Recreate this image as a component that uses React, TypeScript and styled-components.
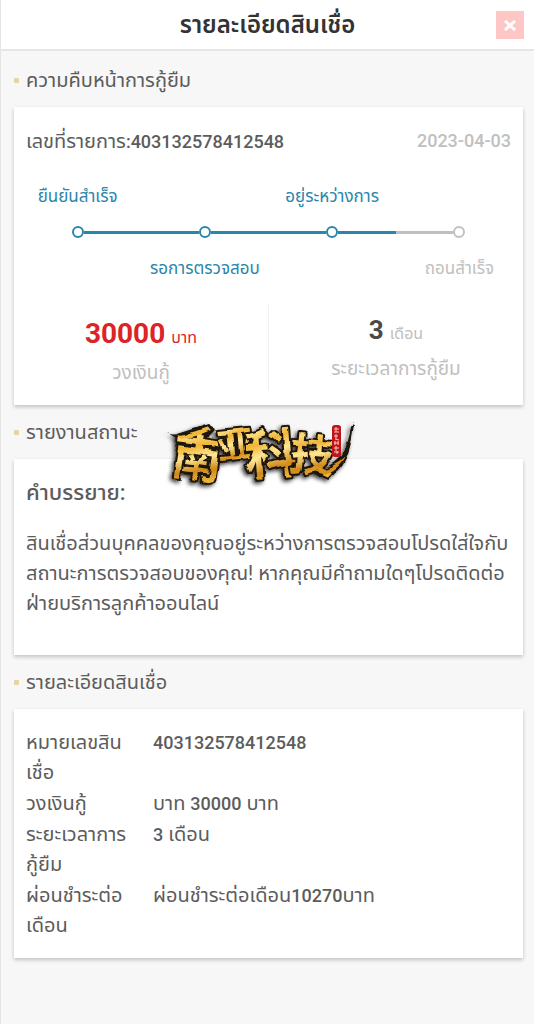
import React from "react";
import styled, { createGlobalStyle, css } from "styled-components";

const GlobalStyle = createGlobalStyle`
  * { box-sizing: border-box; }
  body {
    margin: 0;
    background: #f7f7f7;
    color: #5c5c5c;
    font-family: Roboto, "Noto Sans Thai", "Noto Sans", "Noto Sans CJK SC", sans-serif;
    font-size: 20px;
    line-height: 30px;
  }
  h1, h2, h3, p { margin: 0; }
`;

const blue = "#2b86ab";
const grey = "#c0c0c0";

const Page = styled.div`
  min-height: 100vh;
  border-left: 1px solid #e4e4e4;
  padding-bottom: 64px;
`;

const Header = styled.header`
  display: grid;
  grid-template-columns: 48px 1fr 48px;
  align-items: center;
  height: 51px;
  background: #fff;
  border-bottom: 2px solid #e6e6e6;
`;

const Title = styled.h1`
  grid-column: 2;
  text-align: center;
  font-size: 24px;
  font-weight: 600;
  color: #333;
`;

const CloseButton = styled.button`
  display: flex;
  align-items: center;
  justify-content: center;
  justify-self: center;
  width: 28px;
  height: 28px;
  padding: 0;
  border: 0;
  background: #ffc6c6;
`;

const Main = styled.main`
  padding: 2px 11px 0 13px;
`;

const Section = styled.section`
  position: relative;
`;

const SectionTitle = styled.h2`
  display: flex;
  align-items: center;
  gap: 7px;
  height: 54px;
  font-size: 20px;
  font-weight: 400;

  &::before {
    content: "";
    width: 5px;
    height: 5px;
    border-radius: 1px;
    background: #e6d5a0;
  }
`;

const Card = styled.div`
  background: #fff;
  box-shadow: 0 2px 4px rgba(0, 0, 0, 0.22);
`;

const OrderRow = styled.div`
  display: flex;
  justify-content: space-between;
  padding: 19px 12px 0;
`;

const Digits = styled.span`
  font-size: 18px;
  font-weight: 500;
  line-height: 1;
`;

const OrderDate = styled.time`
  font-size: 18px;
  font-weight: 500;
  color: ${grey};
`;

const Steps = styled.ol`
  display: grid;
  grid-template-columns: repeat(4, 1fr);
  margin: 0;
  padding: 28px 0 0;
  list-style: none;
`;

const Step = styled.li<{ $done: boolean }>`
  display: grid;
  grid-template-rows: 24px 12px 24px;
  row-gap: 18px;
  justify-items: center;
  color: ${(p) => (p.$done ? blue : grey)};
`;

const StepLabel = styled.span<{ $below: boolean }>`
  grid-row: ${(p) => (p.$below ? 3 : 1)};
  font-size: 17px;
  line-height: 24px;
  white-space: nowrap;
`;

const Marker = styled.span`
  grid-row: 2;
  display: flex;
  align-items: center;
  width: 100%;
`;

const Line = styled.span<{ $hidden?: boolean }>`
  flex: 1;
  height: 3px;
  background: ${(p) => (p.$hidden ? "transparent" : "currentColor")};
`;

const Dot = styled.span`
  width: 12px;
  height: 12px;
  border: 2px solid currentColor;
  border-radius: 50%;
`;

const Summary = styled.div`
  display: flex;
  padding: 25px 0 15px;
`;

const SummaryItem = styled.div`
  flex: 1;
  text-align: center;
  color: ${grey};

  & + & { border-left: 1px solid #f0f0f0; }
`;

const Amount = styled.p<{ $large?: boolean }>`
  padding-top: ${(p) => (p.$large ? 9 : 5)}px;
  line-height: 40px;
  font-size: 16px;

  ${(p) => p.$large && css`color: #dc2328;`}

  strong {
    margin-right: 6px;
    font-size: ${(p) => (p.$large ? 28 : 26)}px;
    font-weight: 700;
    color: ${(p) => (p.$large ? "#dc2328" : "#4a4a4a")};
  }
`;

const Caption = styled.p`
  padding-bottom: 2px;
  font-size: 19px;
`;

const Notice = styled(Card)`
  padding: 19px 12px 37px;
`;

const NoticeTitle = styled.h3`
  padding-bottom: 20px;
  font-size: 22px;
  font-weight: 500;
`;

const DetailCard = styled(Card)`
  padding: 18px 12px 17px;
`;

const Details = styled.table`
  width: 100%;
  border-collapse: collapse;
  text-align: left;

  th, td {
    padding: 0 0 1px;
    vertical-align: top;
    font-weight: 400;
  }
  th { width: 127px; padding-right: 20px; }
`;

const Watermark = styled.svg`
  position: absolute;
  z-index: 1;
  left: 150px;
  top: 0;
  width: 200px;
  height: 94px;
  overflow: visible;
  pointer-events: none;
`;

const steps = [
  { label: "ยืนยันสำเร็จ", done: true },
  { label: "รอการตรวจสอบ", done: true },
  { label: "อยู่ระหว่างการ", done: true },
  { label: "ถอนสำเร็จ", done: false },
];

const logoChars = [
  { ch: "南", x: 9, y: 62, size: 50, turn: 8 },
  { ch: "亚", x: 53, y: 43, size: 36, turn: -6 },
  { ch: "科", x: 80, y: 59, size: 54, turn: -4 },
  { ch: "技", x: 127, y: 56, size: 44, turn: 6 },
];

function Logo() {
  return (
    <Watermark viewBox="0 -10 200 94" role="img" aria-label="南亚科技">
      <defs>
        <linearGradient id="gold" x1="0" y1="0" x2="0.2" y2="1">
          <stop offset="0" stopColor="#e9ac2c" />
          <stop offset="0.3" stopColor="#fbdc7c" />
          <stop offset="0.45" stopColor="#f0b536" />
          <stop offset="0.6" stopColor="#ffe795" />
          <stop offset="0.8" stopColor="#d08a18" />
          <stop offset="1" stopColor="#f2c043" />
        </linearGradient>
        <filter id="brush" x="-10%" y="-10%" width="120%" height="130%">
          <feTurbulence type="fractalNoise" baseFrequency="0.06" numOctaves="2" seed="4" />
          <feDisplacementMap in="SourceGraphic" scale="6" xChannelSelector="R" yChannelSelector="G" result="rough" />
          <feDropShadow in="rough" dx="-2" dy="2" stdDeviation="2" floodColor="#000" floodOpacity="0.8" />
        </filter>
      </defs>
      <g filter="url(#brush)" fontFamily='"Noto Sans CJK SC", sans-serif' fontWeight="700">
        <path d="M3 18 Q9 21 16 18 L44 9 L52 14 L44 22 L22 27 L14 25 Z" fill="#1c140a" />
        <path d="M190 7 Q188 34 180 48 Q172 63 154 62 L146 56 Q168 54 179 38 Q185 26 187 12 Z" fill="#1c140a" />
        {logoChars.map((c) => (
          <text
            key={c.ch}
            x={c.x}
            y={c.y}
            fontSize={c.size}
            transform={`rotate(${c.turn} ${c.x + c.size / 2} ${c.y - c.size / 2})`}
            fill="url(#gold)"
            stroke="#1c140a"
            strokeWidth="4"
            strokeLinejoin="round"
            paintOrder="stroke"
          >
            {c.ch}
          </text>
        ))}
        <path d="M12 20 Q18 22 26 18 L44 12 L47 15 L32 21 L17 24 Z" fill="#f0b93a" />
        <path d="M181 42 Q173 57 158 59 L150 56 Q169 54 181 42 Z" fill="#d68e1a" />
      </g>
      <rect x="168" y="10" width="9" height="32" rx="3" fill="#c01418" />
      <path
        d="M170 14h5M172 12v5M170 17h5M170 21h4M172 19v5M171 24l4 1M170 28h5M171 26v4M174 26v4M170 33h5M172 31v5M170 37h5M173 36v3"
        stroke="#f6c9bd"
        strokeWidth="1"
        fill="none"
      />
    </Watermark>
  );
}

export default function App() {
  return (
    <>
      <GlobalStyle />
      <Page>
        <Header>
          <Title>รายละเอียดสินเชื่อ</Title>
          <CloseButton type="button" aria-label="ปิด">
            <svg width="12" height="12" viewBox="0 0 12 12" aria-hidden="true">
              <path d="M1 2l10 9M11 2l-10 9" stroke="#fff" strokeWidth="3" />
            </svg>
          </CloseButton>
        </Header>
        <Main>
          <Section>
            <SectionTitle>ความคืบหน้าการกู้ยืม</SectionTitle>
            <Card>
              <OrderRow>
                <span>เลขที่รายการ<Digits>:403132578412548</Digits></span>
                <OrderDate dateTime="2023-04-03">2023-04-03</OrderDate>
              </OrderRow>
              <Steps>
                {steps.map((step, i) => (
                  <Step key={step.label} $done={step.done}>
                    <StepLabel $below={i % 2 === 1}>{step.label}</StepLabel>
                    <Marker>
                      <Line $hidden={i === 0} />
                      <Dot />
                      <Line $hidden={i === steps.length - 1} />
                    </Marker>
                  </Step>
                ))}
              </Steps>
              <Summary>
                <SummaryItem>
                  <Amount $large><strong>30000</strong>บาท</Amount>
                  <Caption>วงเงินกู้</Caption>
                </SummaryItem>
                <SummaryItem>
                  <Amount><strong>3</strong>เดือน</Amount>
                  <Caption>ระยะเวลาการกู้ยืม</Caption>
                </SummaryItem>
              </Summary>
            </Card>
          </Section>
          <Section>
            <SectionTitle>รายงานสถานะ</SectionTitle>
            <Logo />
            <Notice>
              <NoticeTitle>คำบรรยาย:</NoticeTitle>
              <p>
                สินเชื่อส่วนบุคคลของคุณอยู่ระหว่างการตรวจสอบโปรดใส่ใจกับสถานะการตรวจสอบของคุณ!
                หากคุณมีคำถามใดๆโปรดติดต่อฝ่ายบริการลูกค้าออนไลน์
              </p>
            </Notice>
          </Section>
          <Section>
            <SectionTitle>รายละเอียดสินเชื่อ</SectionTitle>
            <DetailCard>
              <Details>
                <tbody>
                  <tr>
                    <th scope="row">หมายเลขสินเชื่อ</th>
                    <td><Digits>403132578412548</Digits></td>
                  </tr>
                  <tr>
                    <th scope="row">วงเงินกู้</th>
                    <td>บาท <Digits>30000</Digits> บาท</td>
                  </tr>
                  <tr>
                    <th scope="row">ระยะเวลาการกู้ยืม</th>
                    <td><Digits>3</Digits> เดือน</td>
                  </tr>
                  <tr>
                    <th scope="row">ผ่อนชำระต่อเดือน</th>
                    <td>ผ่อนชำระต่อเดือน<Digits>10270</Digits>บาท</td>
                  </tr>
                </tbody>
              </Details>
            </DetailCard>
          </Section>
        </Main>
      </Page>
    </>
  );
}
